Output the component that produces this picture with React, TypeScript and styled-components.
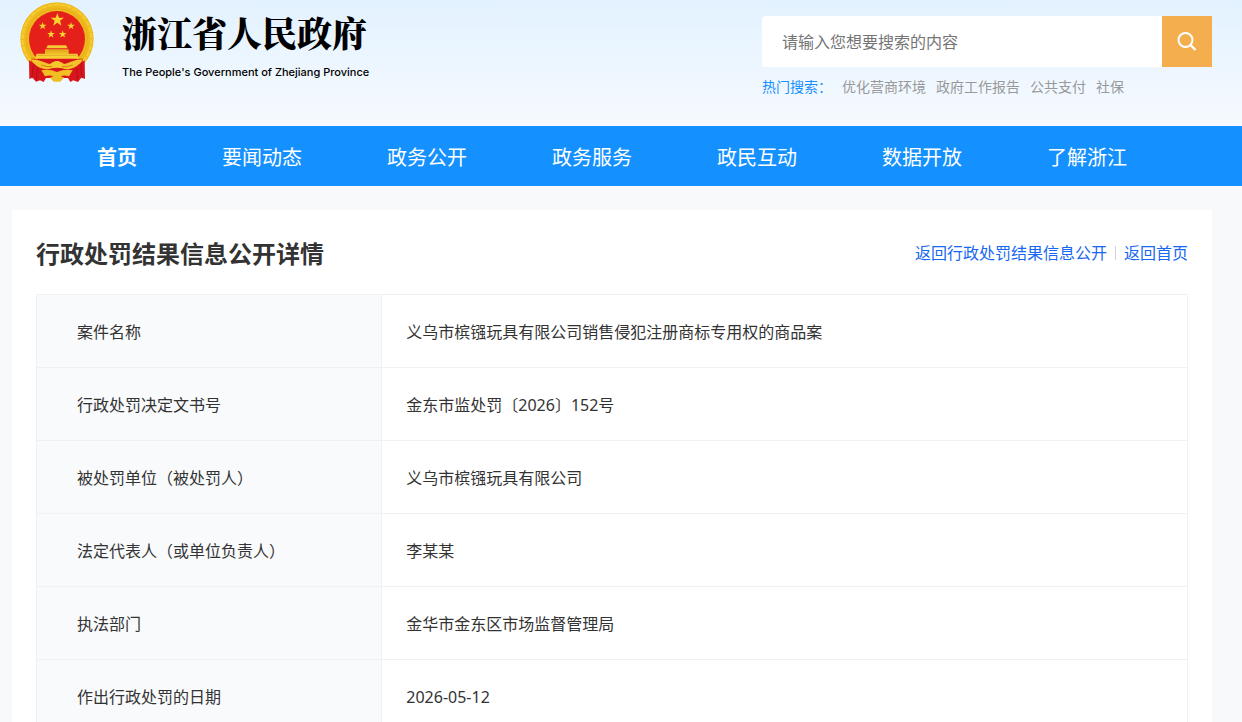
import React from "react";
import styled, { createGlobalStyle } from "styled-components";

const GlobalStyle = createGlobalStyle`
  * { box-sizing: border-box; }
  body {
    margin: 0;
    background: #f8f9fb;
    color: #333;
    font-family: "Noto Sans", "Noto Sans CJK SC", sans-serif;
    font-size: 16px;
    line-height: 24px;
  }
  a { color: inherit; text-decoration: none; }
`;

const Header = styled.header`
  display: flex;
  justify-content: space-between;
  height: 126px;
  padding: 0 30px 0 20px;
  background: linear-gradient(#e3f2ff, #f6faff);
`;

const Brand = styled.a`
  display: flex;
  align-items: flex-start;
  gap: 28px;
  padding-top: 2px;
  color: #000;
`;

const BrandText = styled.span`
  display: flex;
  flex-direction: column;
  padding-top: 8px;
`;

const BrandName = styled.strong`
  font-family: "Noto Serif CJK SC", "Noto Sans CJK SC", serif;
  font-size: 35px;
  font-weight: 900;
  line-height: 44px;
`;

const BrandSub = styled.span`
  padding-top: 10px;
  font-family: Inter, sans-serif;
  font-size: 11px;
  font-weight: 500;
  line-height: 16px;
`;

const SearchArea = styled.div`
  width: 450px;
  padding-top: 16px;
`;

const SearchForm = styled.form`
  display: flex;
  height: 51px;
`;

const SearchInput = styled.input`
  flex: 1;
  min-width: 0;
  padding: 0 20px;
  border: 0;
  border-radius: 4px 0 0 4px;
  background: #fff;
  font: inherit;
  &::placeholder { color: #757575; opacity: 1; }
`;

const SearchButton = styled.button`
  display: flex;
  align-items: center;
  justify-content: center;
  width: 50px;
  padding: 0;
  border: 0;
  background: #f5ae4e;
`;

const HotSearch = styled.div`
  display: flex;
  gap: 10px;
  padding-top: 10px;
  color: #999;
  font-size: 14px;
  line-height: 20px;
`;

const HotLabel = styled.span`
  color: #1890ff;
`;

const Nav = styled.nav`
  display: flex;
  justify-content: space-between;
  height: 60px;
  padding: 0 115px 0 97px;
  background: #1591ff;
`;

const NavLink = styled.a<{ $active?: boolean }>`
  color: #fff;
  font-size: 20px;
  font-weight: ${(p) => (p.$active ? 700 : 400)};
  line-height: 64px;
`;

const Card = styled.main`
  margin: 24px 30px 24px 12px;
  padding: 24px;
  background: #fff;
`;

const CardHead = styled.div`
  display: flex;
  align-items: center;
  justify-content: space-between;
  height: 40px;
  margin-bottom: 20px;
`;

const Title = styled.h1`
  margin: 0;
  font-size: 24px;
  line-height: 40px;
`;

const BackLinks = styled.div`
  display: flex;
  align-items: center;
  padding-bottom: 2px;
  color: #1768f0;
`;

const Divider = styled.span`
  width: 1px;
  height: 14px;
  margin: 0 8px;
  background: #d4d4d4;
`;

const InfoTable = styled.table`
  width: 100%;
  border-collapse: collapse;
  table-layout: fixed;
`;

const Label = styled.th`
  width: 30%;
  height: 73px;
  padding: 2px 24px 0 40px;
  border: 1px solid #f0f1f3;
  background: #f9fafc;
  font-weight: 400;
  text-align: left;
`;

const Value = styled.td`
  padding: 2px 24px 0;
  border: 1px solid #f0f1f3;
`;

const star = (cx: number, cy: number, r: number) =>
  Array.from({ length: 10 }, (_, i) => {
    const a = (Math.PI / 5) * i - Math.PI / 2;
    const k = i % 2 ? r * 0.4 : r;
    return `${(cx + k * Math.cos(a)).toFixed(1)},${(cy + k * Math.sin(a)).toFixed(1)}`;
  }).join(" ");

const Emblem = () => (
  <svg width="74" height="81" viewBox="30 4 222 243" role="img" aria-label="国徽">
    <circle cx="141" cy="115" r="110" fill="#eeb91c" />
    <circle cx="141" cy="115" r="103" fill="none" stroke="#f5cb30" strokeWidth="7" strokeDasharray="16 3" />
    <circle cx="141" cy="115" r="91" fill="none" stroke="#e2a91a" strokeWidth="2" />
    <circle cx="141" cy="115" r="84" fill="#e5201b" />
    <g fill="#f6d32d">
      <polygon points={star(142, 58, 21)} />
      <polygon points={star(98, 76, 12)} />
      <polygon points={star(183, 76, 12)} />
      <polygon points={star(123, 101, 12)} />
      <polygon points={star(158, 101, 12)} />
    </g>
    <path d="M63 174H219L213 232 204 244 190 239 181 244 174 232H108L101 244 90 239 78 243 68 232Z" fill="#d9151c" />
    <path d="M113 134H168L173 143H109Z" fill="#f4cc35" />
    <path d="M105 146H176V161H105Z" fill="#ebb822" />
    <path d="M80 159H202L207 174H75Z" fill="#f6cf35" />
    <path d="M104 151H177M83 164H200" stroke="#d99a19" strokeWidth="2" />
    <path d="M62 176C91 176 101 187 120 190C132 179 150 179 162 190C181 187 192 176 219 176C211 193 190 205 173 206H109C91 205 70 193 62 176Z" fill="#f3c329" />
    <path d="M94 193Q110 200 126 198M188 193Q172 200 156 198" fill="none" stroke="#dd7a1b" strokeWidth="3" />
    <circle cx="141" cy="196" r="15" fill="#f4c82e" />
    <path d="M110 208Q141 194 172 208L162 218Q141 207 120 218Z" fill="#d8171b" />
    <path d="M94 209Q118 204 141 214Q165 204 188 209L177 227Q160 220 141 231Q123 220 105 227Z" fill="#f1be24" />
    <path d="M120 231Q141 218 162 231L151 243H131Z" fill="#efbd25" />
    <path d="M57 179L78 194 70 229 58 235ZM224 179L204 194 211 229 225 235Z" fill="#d9151c" />
    <path d="M70 193L66 233M82 202L79 238M212 193L216 233M200 202L203 238" stroke="#b3101a" strokeWidth="3" />
  </svg>
);

const SearchIcon = () => (
  <svg width="20" height="20" viewBox="0 0 20 20" fill="none" stroke="#fff" strokeWidth="2" aria-hidden="true">
    <circle cx="8.5" cy="8" r="7" />
    <path d="M13.5 13L18.5 18" strokeWidth="2.4" />
  </svg>
);

const navItems = ["首页", "要闻动态", "政务公开", "政务服务", "政民互动", "数据开放", "了解浙江"];
const hotWords = ["优化营商环境", "政府工作报告", "公共支付", "社保"];
const rows = [
  ["案件名称", "义乌市槟镪玩具有限公司销售侵犯注册商标专用权的商品案"],
  ["行政处罚决定文书号", "金东市监处罚〔2026〕152号"],
  ["被处罚单位（被处罚人）", "义乌市槟镪玩具有限公司"],
  ["法定代表人（或单位负责人）", "李某某"],
  ["执法部门", "金华市金东区市场监督管理局"],
  ["作出行政处罚的日期", "2026-05-12"],
];

export default function App() {
  return (
    <div lang="zh-CN">
      <GlobalStyle />
      <Header>
        <Brand href="#">
          <Emblem />
          <BrandText>
            <BrandName>浙江省人民政府</BrandName>
            <BrandSub>The People's Government of Zhejiang Province</BrandSub>
          </BrandText>
        </Brand>
        <SearchArea>
          <SearchForm role="search">
            <SearchInput type="text" aria-label="搜索" placeholder="请输入您想要搜索的内容" />
            <SearchButton type="button" aria-label="搜索">
              <SearchIcon />
            </SearchButton>
          </SearchForm>
          <HotSearch>
            <HotLabel>热门搜索：</HotLabel>
            {hotWords.map((w) => (
              <a href="#" key={w}>{w}</a>
            ))}
          </HotSearch>
        </SearchArea>
      </Header>
      <Nav>
        {navItems.map((item, i) => (
          <NavLink href="#" key={item} $active={i === 0}>{item}</NavLink>
        ))}
      </Nav>
      <Card>
        <CardHead>
          <Title>行政处罚结果信息公开详情</Title>
          <BackLinks>
            <a href="#">返回行政处罚结果信息公开</a>
            <Divider />
            <a href="#">返回首页</a>
          </BackLinks>
        </CardHead>
        <InfoTable>
          <tbody>
            {rows.map(([label, value]) => (
              <tr key={label}>
                <Label scope="row">{label}</Label>
                <Value>{value}</Value>
              </tr>
            ))}
          </tbody>
        </InfoTable>
      </Card>
    </div>
  );
}
